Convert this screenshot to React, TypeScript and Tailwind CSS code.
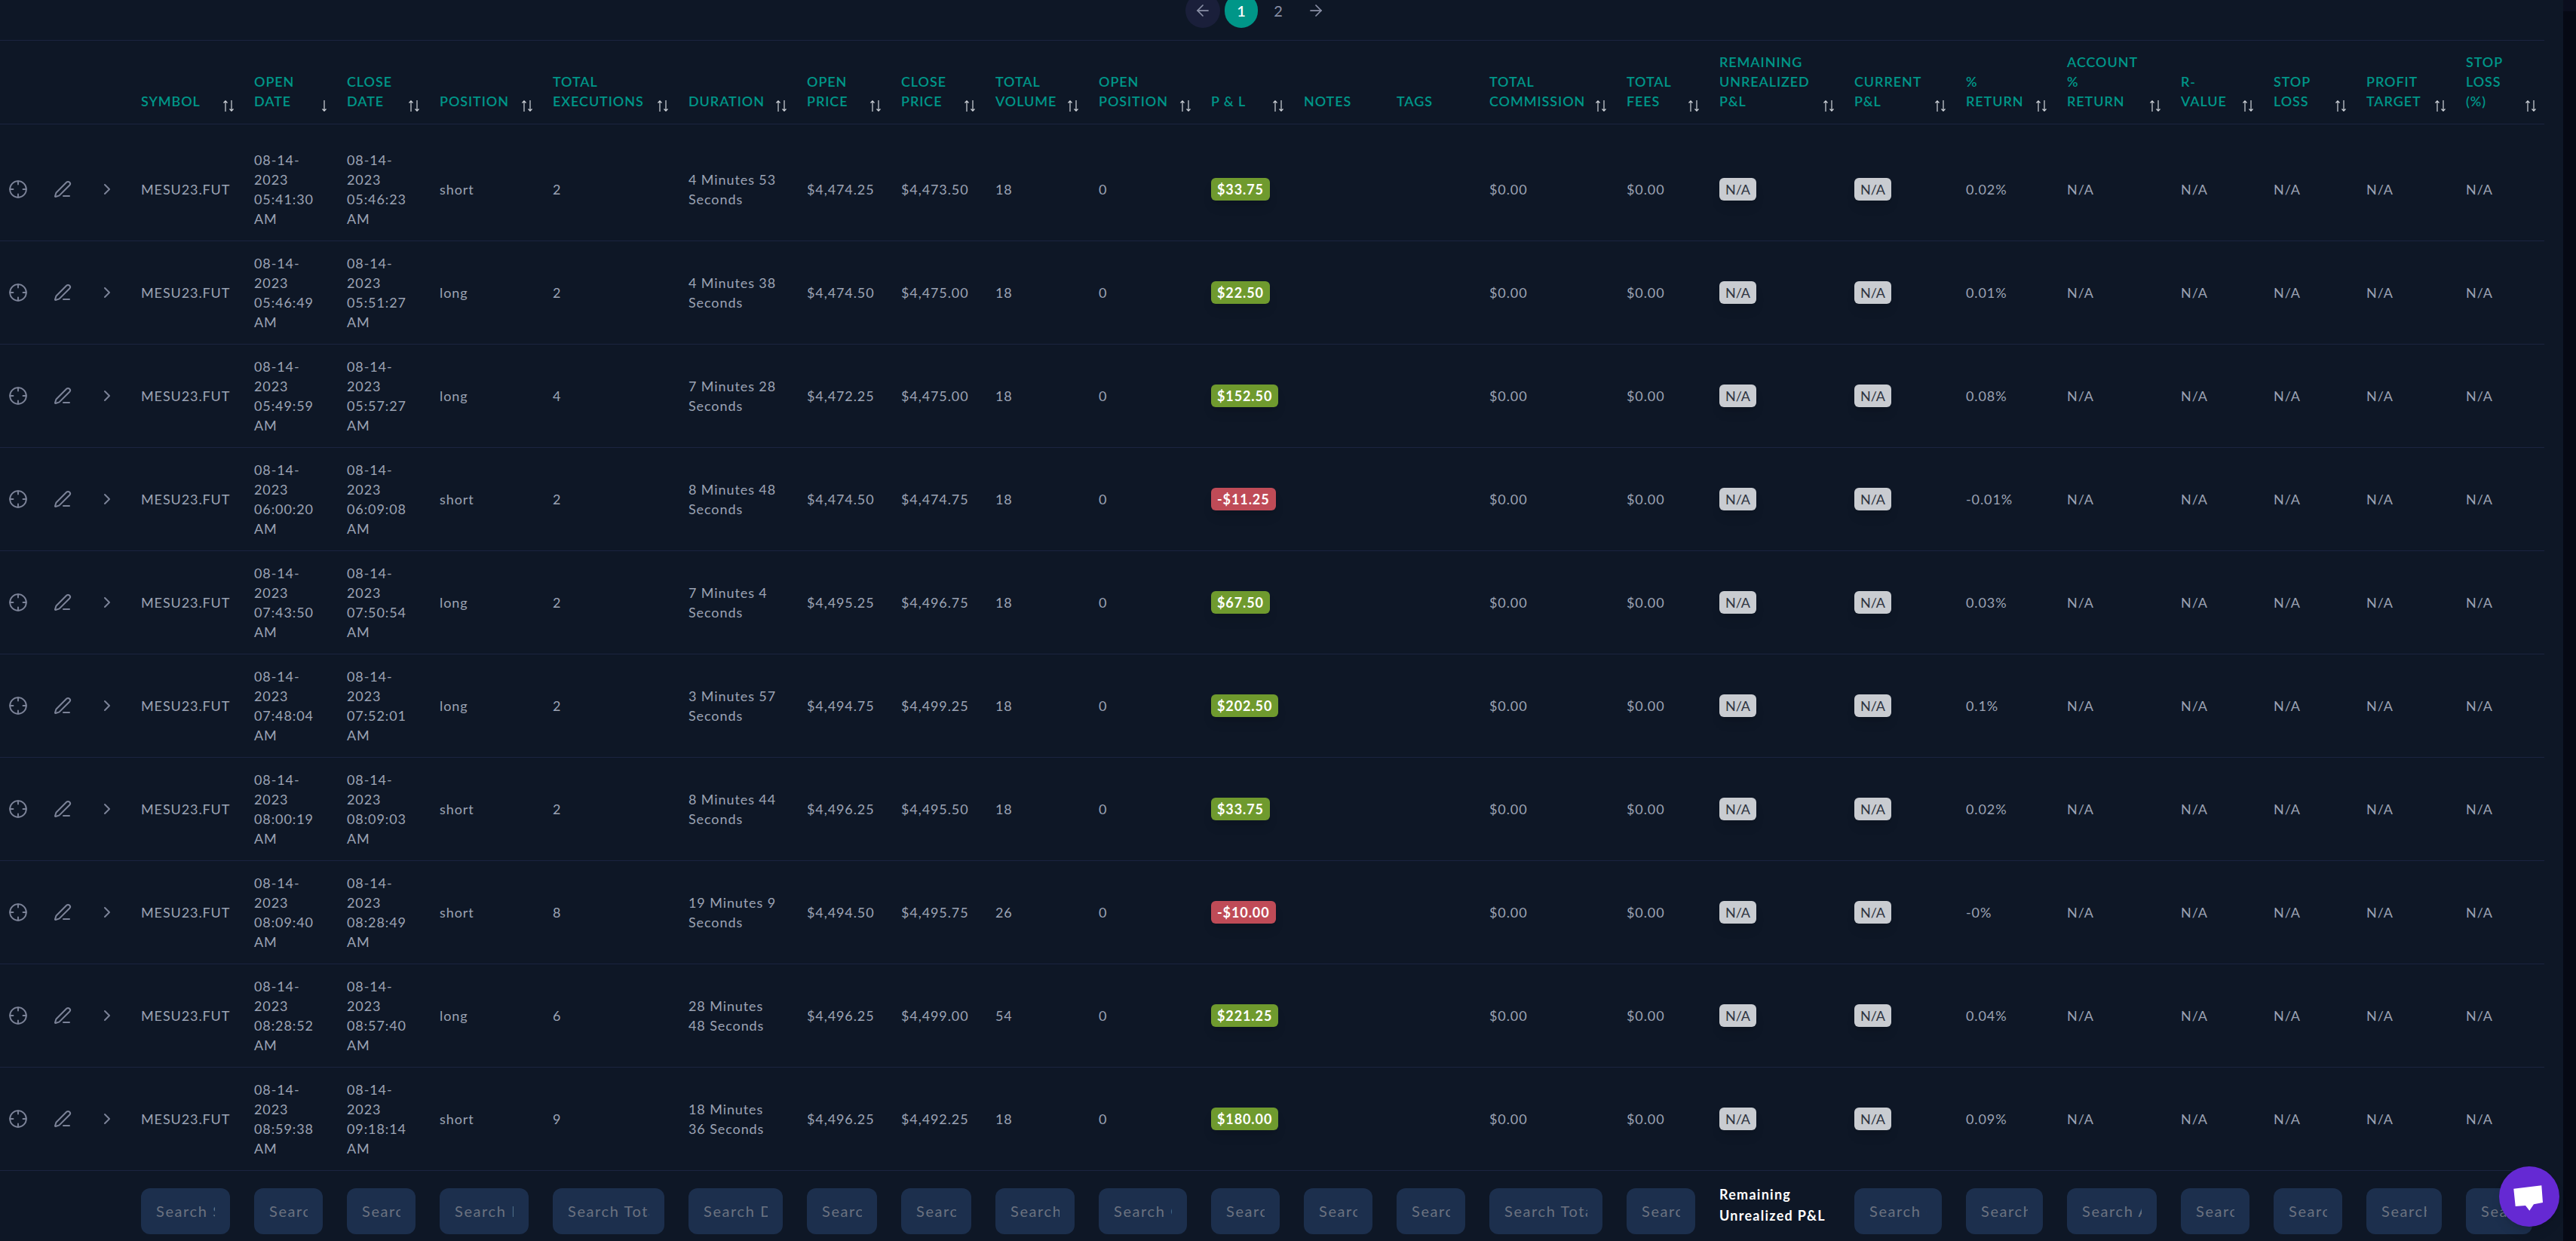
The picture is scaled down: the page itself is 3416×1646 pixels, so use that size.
import React from 'react';
import { ArrowLeft, ArrowRight, ChevronRight, Crosshair, PenLine } from 'lucide-react';

type Column = { label: string; width: string; search: string; sort?: 'both' | 'down' | 'none' };

const columns: Column[] = [
  { label: 'Symbol', width: 'w-[150px]', search: 'Search Symbol' },
  { label: 'Open Date', width: 'w-[123px]', search: 'Search Open Date', sort: 'down' },
  { label: 'Close Date', width: 'w-[123px]', search: 'Search Close Date' },
  { label: 'Position', width: 'w-[150px]', search: 'Search Position' },
  { label: 'Total Executions', width: 'w-[180px]', search: 'Search Total Executions' },
  { label: 'Duration', width: 'w-[157px]', search: 'Search Duration' },
  { label: 'Open Price', width: 'w-[125px]', search: 'Search Open Price' },
  { label: 'Close Price', width: 'w-[125px]', search: 'Search Close Price' },
  { label: 'Total Volume', width: 'w-[137px]', search: 'Search Total Volume' },
  { label: 'Open Position', width: 'w-[149px]', search: 'Search Open Position' },
  { label: 'P & L', width: 'w-[123px]', search: 'Search P & L' },
  { label: 'Notes', width: 'w-[123px]', search: 'Search Notes', sort: 'none' },
  { label: 'Tags', width: 'w-[123px]', search: 'Search Tags', sort: 'none' },
  { label: 'Total Commission', width: 'w-[182px]', search: 'Search Total Commission' },
  { label: 'Total Fees', width: 'w-[123px]', search: 'Search Total Fees' },
  { label: 'Remaining Unrealized P&L', width: 'w-[179px]', search: '' },
  { label: 'Current P&L', width: 'w-[148px]', search: 'Search Current P&L' },
  { label: '% Return', width: 'w-[134px]', search: 'Search % Return' },
  { label: 'Account % Return', width: 'w-[151px]', search: 'Search Account % Return' },
  { label: 'R-Value', width: 'w-[123px]', search: 'Search R-Value' },
  { label: 'Stop Loss', width: 'w-[123px]', search: 'Search Stop Loss' },
  { label: 'Profit Target', width: 'w-[132px]', search: 'Search Profit Target' },
  { label: 'Stop Loss (%)', width: 'w-[120px]', search: 'Search Stop Loss (%)' },
];

const trades = [
  ['05:41:30', '05:46:23', 'short', '2', '4 Minutes 53 Seconds', '$4,474.25', '$4,473.50', '18', '$33.75', '0.02%'],
  ['05:46:49', '05:51:27', 'long', '2', '4 Minutes 38 Seconds', '$4,474.50', '$4,475.00', '18', '$22.50', '0.01%'],
  ['05:49:59', '05:57:27', 'long', '4', '7 Minutes 28 Seconds', '$4,472.25', '$4,475.00', '18', '$152.50', '0.08%'],
  ['06:00:20', '06:09:08', 'short', '2', '8 Minutes 48 Seconds', '$4,474.50', '$4,474.75', '18', '-$11.25', '-0.01%'],
  ['07:43:50', '07:50:54', 'long', '2', '7 Minutes 4 Seconds', '$4,495.25', '$4,496.75', '18', '$67.50', '0.03%'],
  ['07:48:04', '07:52:01', 'long', '2', '3 Minutes 57 Seconds', '$4,494.75', '$4,499.25', '18', '$202.50', '0.1%'],
  ['08:00:19', '08:09:03', 'short', '2', '8 Minutes 44 Seconds', '$4,496.25', '$4,495.50', '18', '$33.75', '0.02%'],
  ['08:09:40', '08:28:49', 'short', '8', '19 Minutes 9 Seconds', '$4,494.50', '$4,495.75', '26', '-$10.00', '-0%'],
  ['08:28:52', '08:57:40', 'long', '6', '28 Minutes 48 Seconds', '$4,496.25', '$4,499.00', '54', '$221.25', '0.04%'],
  ['08:59:38', '09:18:14', 'short', '9', '18 Minutes 36 Seconds', '$4,496.25', '$4,492.25', '18', '$180.00', '0.09%'],
];

const SortIcon = ({ mode }: { mode: 'both' | 'down' }) => (
  <svg width="16" height="15" viewBox="0 0 16 15" fill="none" className="shrink-0 text-[#d1d5db]">
    {mode === 'both' && <path d="M4 15V1M1.5 3.5 4 .8l2.5 2.700" stroke="currentColor" strokeWidth="1.200" />}
    <path d="M12 0v14M9.500 11.500 12 14.200l2.500-2.700" stroke="currentColor" strokeWidth="1.200" />
  </svg>
);

const Badge = ({ text }: { text: string }) => {
  const tone = text === 'N/A'
    ? 'bg-[#c9ccd1] text-[#2d3340] font-normal tracking-normal'
    : text.startsWith('-')
      ? 'bg-[#bf4b57] text-white font-bold'
      : 'bg-[#6f9a2e] text-white font-bold';
  return <span className={`inline-flex h-[30px] items-center rounded-md px-2 leading-none shadow-lg ${tone}`}>{text}</span>;
};

const App = () => {
  return (
    <div className="flex h-[1646px] w-full overflow-hidden bg-[#0e1726] font-['Lato',sans-serif]">
      <main className="w-[3399px] shrink-0">
        <nav className="-mt-[9px] flex h-[62px] items-start justify-center pr-[59px] text-[#8a90a6]">
          <div className="flex items-center text-[20px]">
            <button className="flex h-[46px] w-[46px] items-center justify-center rounded-full bg-[#1a1f3a]"><ArrowLeft size={24} strokeWidth={1.75} /></button>
            <button className="ml-[6px] h-[46px] w-[44px] rounded-full bg-[#009688] font-semibold text-white">1</button>
            <button className="h-[46px] w-[54px]">2</button>
            <button className="flex h-[46px] w-[46px] items-center justify-center"><ArrowRight size={24} strokeWidth={1.75} /></button>
          </div>
        </nav>

        <table className="w-[3373px] table-fixed border-collapse text-left text-[18px] leading-[26px] tracking-[0.05em] text-[#9ca3b4]">
          <thead>
            <tr className="border-y border-[#1b2440]">
              <th className="w-[171px]" />
              {columns.map((col) => (
                <th key={col.label} className={`${col.width} px-4 pt-[15px] pb-[17px] align-bottom font-semibold text-[#009688] uppercase`}>
                  <div className="-mr-[6px] flex items-end justify-between gap-1">
                    <span className={col.label === 'P & L' ? '' : 'w-min'}>{col.label}</span>
                    {col.sort !== 'none' && <span className="-mb-[1px]"><SortIcon mode={col.sort === 'down' ? 'down' : 'both'} /></span>}
                  </div>
                </th>
              ))}
            </tr>
          </thead>
          <tbody>
            <tr aria-hidden="true"><td colSpan={24} className="h-[18px]" /></tr>
            {trades.map((t, i) => (
              <tr key={i} className="border-b border-[#1b2440]">
                <td>
                  <div className="flex items-center pl-[11px] text-[#7c8398]">
                    <Crosshair size={26} strokeWidth={1.75} />
                    <PenLine size={24} strokeWidth={2} className="ml-[34px]" />
                    <ChevronRight size={24} strokeWidth={2} className="ml-[35px]" />
                  </div>
                </td>
                <td className="p-4">MESU23.FUT</td>
                <td className="p-4">08-14-2023 {t[0]} AM</td>
                <td className="p-4">08-14-2023 {t[1]} AM</td>
                <td className="p-4">{t[2]}</td>
                <td className="p-4">{t[3]}</td>
                <td className="p-4">{t[4]}</td>
                <td className="p-4">{t[5]}</td>
                <td className="p-4">{t[6]}</td>
                <td className="p-4">{t[7]}</td>
                <td className="p-4">0</td>
                <td className="p-4"><Badge text={t[8]} /></td>
                <td className="p-4" />
                <td className="p-4" />
                <td className="p-4">$0.00</td>
                <td className="p-4">$0.00</td>
                <td className="p-4"><Badge text="N/A" /></td>
                <td className="p-4"><Badge text="N/A" /></td>
                <td className="p-4">{t[9]}</td>
                <td className="p-4">N/A</td>
                <td className="p-4">N/A</td>
                <td className="p-4">N/A</td>
                <td className="p-4">N/A</td>
                <td className="p-4">N/A</td>
              </tr>
            ))}
          </tbody>
          <tfoot>
            <tr>
              <td />
              {columns.map((col) => (
                <td key={col.label} className="px-4 pt-[23px] align-top">
                  {col.search ? (
                    <input
                      readOnly
                      placeholder={col.search}
                      className="h-[61px] w-full rounded-xl bg-[#1c2f4d] px-[20px] text-[20px] tracking-[0.08em] text-white outline-none placeholder:text-[#6b7280]"
                    />
                  ) : (
                    <span className="-mt-[6px] block text-[18px] leading-[28px] font-bold tracking-[0.07em] text-white">Remaining Unrealized P&amp;L</span>
                  )}
                </td>
              ))}
            </tr>
          </tfoot>
        </table>
      </main>
      <aside className="h-full w-[17px] bg-[#060914]">
        <div className="h-[15px] bg-[#0b0e1e]" />
      </aside>

      <button className="absolute top-[1547px] left-[3314px] h-[80px] w-[80px] rounded-full bg-[#6529d3] shadow-lg">
        <svg width="80" height="80" viewBox="0 0 80 80" fill="white">
          <path d="M19.300 29.700 56.300 25.300 58 48 46 50.300 40.300 58.700 35 52 21.700 53Z" />
        </svg>
      </button>
    </div>
  );
};

export default App;
